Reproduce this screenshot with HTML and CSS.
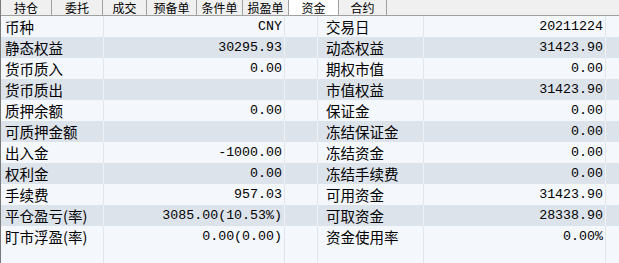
FILE: index.html
```html
<!DOCTYPE html>
<html lang="zh-CN">

<head>
    <meta charset="UTF-8">
    <title>资金</title>
    <link rel="stylesheet" href="styles.css">
</head>

<body>
    <div class="panel">
        <div class="tabs">
            <div class="tab">持仓</div>
            <div class="tab">委托</div>
            <div class="tab">成交</div>
            <div class="tab">预备单</div>
            <div class="tab">条件单</div>
            <div class="tab">损盈单</div>
            <div class="tab active">资金</div>
            <div class="tab">合约</div>
        </div>
        <div class="grid">
            <div class="row">
                <div class="cell label">币种</div><div class="cell num">CNY</div><div class="cell"></div>
                <div class="cell label label2">交易日</div><div class="cell num">20211224</div><div class="cell"></div>
            </div>
            <div class="row alt">
                <div class="cell label">静态权益</div><div class="cell num">30295.93</div><div class="cell"></div>
                <div class="cell label label2">动态权益</div><div class="cell num">31423.90</div><div class="cell"></div>
            </div>
            <div class="row">
                <div class="cell label">货币质入</div><div class="cell num">0.00</div><div class="cell"></div>
                <div class="cell label label2">期权市值</div><div class="cell num">0.00</div><div class="cell"></div>
            </div>
            <div class="row alt">
                <div class="cell label">货币质出</div><div class="cell num"></div><div class="cell"></div>
                <div class="cell label label2">市值权益</div><div class="cell num">31423.90</div><div class="cell"></div>
            </div>
            <div class="row">
                <div class="cell label">质押余额</div><div class="cell num">0.00</div><div class="cell"></div>
                <div class="cell label label2">保证金</div><div class="cell num">0.00</div><div class="cell"></div>
            </div>
            <div class="row alt">
                <div class="cell label">可质押金额</div><div class="cell num"></div><div class="cell"></div>
                <div class="cell label label2">冻结保证金</div><div class="cell num">0.00</div><div class="cell"></div>
            </div>
            <div class="row">
                <div class="cell label">出入金</div><div class="cell num">-1000.00</div><div class="cell"></div>
                <div class="cell label label2">冻结资金</div><div class="cell num">0.00</div><div class="cell"></div>
            </div>
            <div class="row alt">
                <div class="cell label">权利金</div><div class="cell num">0.00</div><div class="cell"></div>
                <div class="cell label label2">冻结手续费</div><div class="cell num">0.00</div><div class="cell"></div>
            </div>
            <div class="row">
                <div class="cell label">手续费</div><div class="cell num">957.03</div><div class="cell"></div>
                <div class="cell label label2">可用资金</div><div class="cell num">31423.90</div><div class="cell"></div>
            </div>
            <div class="row alt">
                <div class="cell label">平仓盈亏(率)</div><div class="cell num">3085.00(10.53%)</div><div class="cell"></div>
                <div class="cell label label2">可取资金</div><div class="cell num">28338.90</div><div class="cell"></div>
            </div>
            <div class="row">
                <div class="cell label">盯市浮盈(率)</div><div class="cell num">0.00(0.00)</div><div class="cell"></div>
                <div class="cell label label2">资金使用率</div><div class="cell num">0.00%</div><div class="cell"></div>
            </div>
            <div class="row">
                <div class="cell label"></div><div class="cell num"></div><div class="cell"></div>
                <div class="cell label label2"></div><div class="cell num"></div><div class="cell"></div>
            </div>
        </div>
    </div>
</body>

</html>
```

FILE: styles.css
```css
body {
    margin: 0;
    padding: 0;
    background: #f4f7fc;
    font-family: "Noto Sans CJK SC", sans-serif;
    color: #000;
    overflow: hidden;
}

.panel {
    border-left: 1px solid #7a7a7a;
    height: 263px;
    box-sizing: border-box;
}

.tabs {
    display: flex;
    height: 15px;
    background: #f0f0f0;
    border-bottom: 1px solid #a0a0a0;
}

.tab {
    box-sizing: border-box;
    border-right: 1px solid #a0a0a0;
    font-size: 12px;
    line-height: 15px;
    text-align: center;
}

.tab:nth-child(1) { width: 51px; }
.tab:nth-child(2) { width: 51px; }
.tab:nth-child(3) { width: 44px; }
.tab:nth-child(4) { width: 50px; }
.tab:nth-child(5) { width: 46px; }
.tab:nth-child(6) { width: 46px; }
.tab:nth-child(7) { width: 50px; }
.tab:nth-child(8) { width: 48px; }

.tab.active {
    background: #fff;
}

.row {
    display: grid;
    grid-template-columns: 103px 181px 33px 106px 182px 1fr;
    height: 21px;
    background: #f4f7fc;
}

.row.alt {
    background: #dde3eb;
}

.cell {
    box-sizing: border-box;
    border-right: 1px solid #e1e6ed;
    line-height: 21px;
    white-space: nowrap;
    overflow: hidden;
}

.row.alt .cell {
    border-right-color: #eef2f7;
}

.cell:last-child {
    border-right: none;
}

.label {
    padding-left: 4px;
    font-size: 14.5px;
}

.label2 {
    padding-left: 8px;
}

.num {
    padding-right: 2px;
    text-align: right;
    font-family: "Liberation Mono", monospace;
    font-size: 13.3px;
}
```
